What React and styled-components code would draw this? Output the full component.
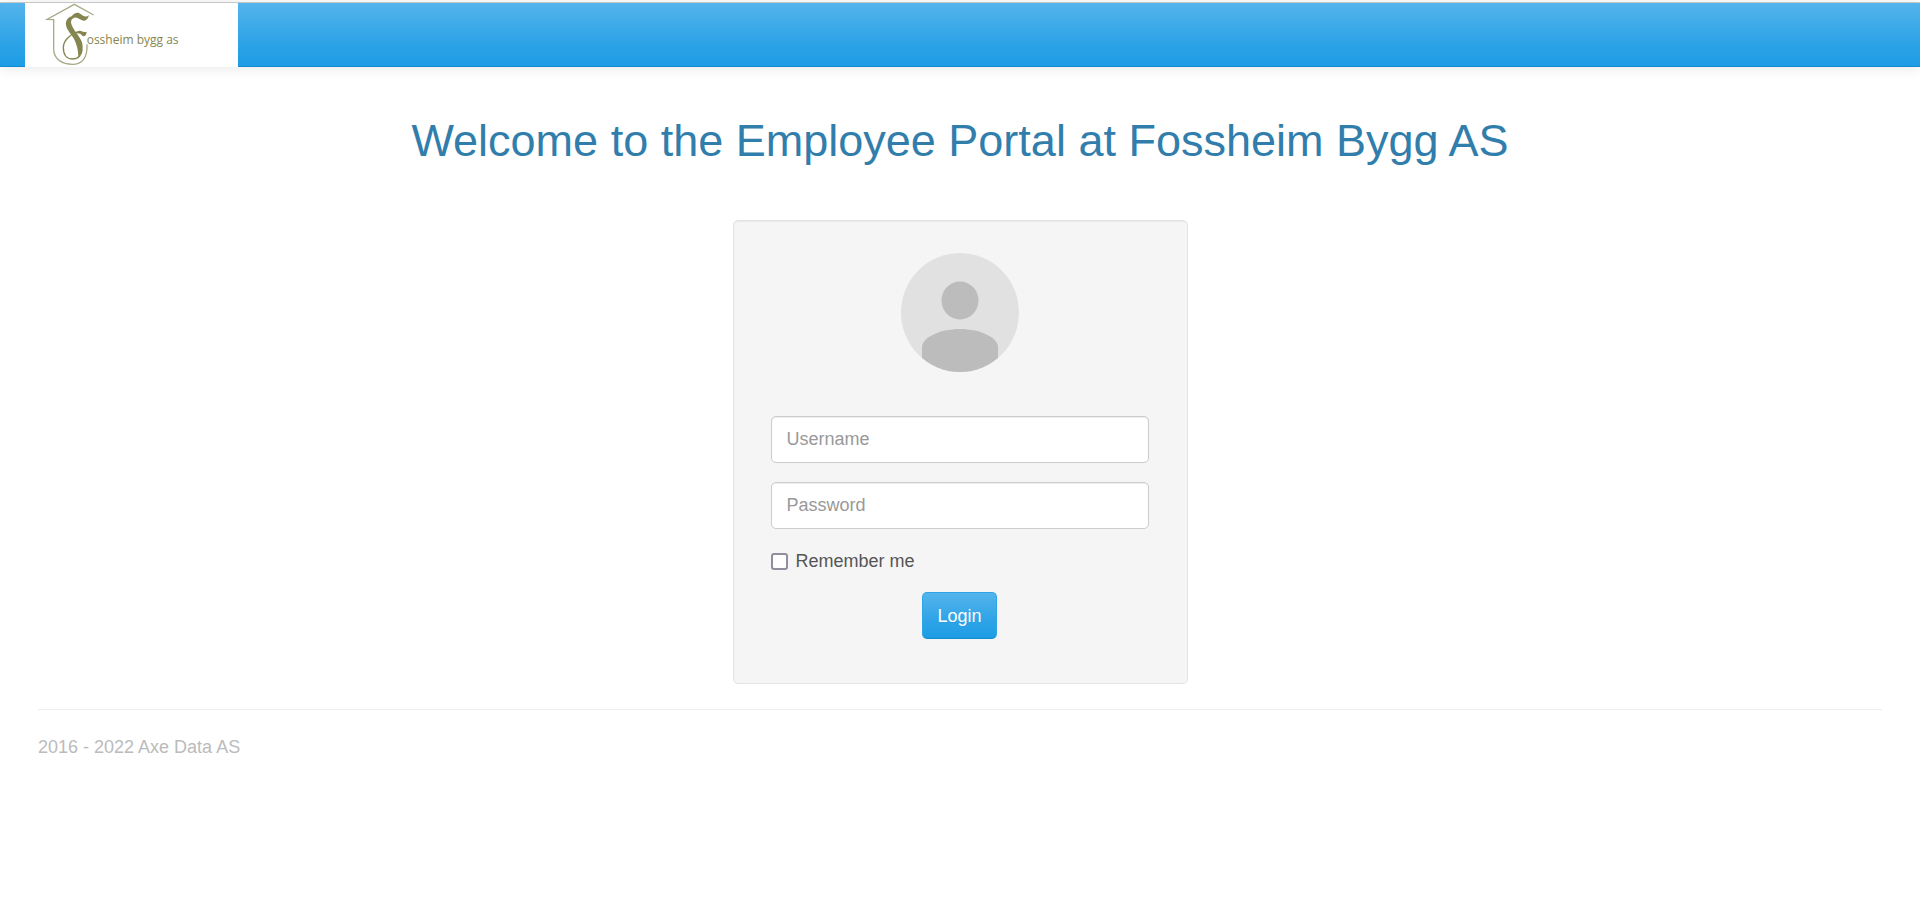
import React from 'react';
import styled, { createGlobalStyle } from 'styled-components';

const gradient = 'linear-gradient(#54b4eb, #2fa4e7 60%, #1d9ce5)';

const GlobalStyle = createGlobalStyle`
  * {
    box-sizing: border-box;
  }

  body {
    margin: 0;
    background: #fff;
    color: #555;
    font-family: 'Liberation Sans', Arial, sans-serif;
    font-size: 18px;
    line-height: 26px;
  }
`;

const Navbar = styled.header`
  display: flex;
  height: 65px;
  margin-top: 2px;
  padding: 0 25px;
  border-top: 1px solid #c4c8ca;
  border-bottom: 1px solid #178acc;
  background: ${gradient};
  box-shadow: 0 1px 12px rgba(0, 0, 0, 0.1);
`;

const Brand = styled.a`
  display: block;
  width: 213px;
  height: 64px;
  background: #fff;

  svg {
    display: block;
  }
`;

const Page = styled.div`
  padding: 0 38px;
`;

const Title = styled.h1`
  margin: 48px 0 54px;
  color: #317eac;
  font-size: 45px;
  font-weight: 400;
  line-height: 51px;
  text-align: center;
`;

const LoginCard = styled.form`
  display: flex;
  flex-direction: column;
  max-width: 455px;
  margin: 0 auto 25px;
  padding: 32px 38px 44px 37px;
  border: 1px solid #e3e3e3;
  border-radius: 5px;
  background: #f5f5f5;
  box-shadow: inset 0 1px 1px rgba(0, 0, 0, 0.05);
`;

const Avatar = styled.svg`
  align-self: center;
  width: 118px;
  height: 119px;
  margin-bottom: 44px;
`;

const TextField = styled.input`
  width: 100%;
  height: 47px;
  margin-bottom: 19px;
  padding: 0 15px;
  border: 1px solid #ccc;
  border-radius: 5px;
  background: #fff;
  box-shadow: inset 0 1px 1px rgba(0, 0, 0, 0.075);
  color: #555;
  font: inherit;

  &::placeholder {
    color: #999;
    opacity: 1;
  }
`;

const Remember = styled.label`
  display: flex;
  align-items: center;
  align-self: flex-start;
  gap: 8px;
  margin-bottom: 18px;
`;

const Checkbox = styled.input`
  appearance: none;
  width: 17px;
  height: 17px;
  margin: 0;
  border: 2px solid #8f8f9d;
  border-radius: 3px;
  background: #fff;

  &:checked {
    background: #2fa4e7;
  }
`;

const LoginButton = styled.button`
  align-self: center;
  height: 47px;
  padding: 0 14px;
  border: 1px solid #2fa4e7;
  border-bottom-color: #178acc;
  border-radius: 5px;
  background: ${gradient};
  color: #fff;
  font: inherit;
  text-shadow: 0 1px 0 rgba(0, 0, 0, 0.05);
  cursor: pointer;
`;

const Footer = styled.footer`
  padding-top: 24px;
  border-top: 1px solid #eee;
  color: #bbb;

  p {
    margin: 0;
  }
`;

const Logo = () => (
  <svg width="213" height="64" viewBox="0 0 639 192" role="img" aria-label="Fossheim bygg as">
    <path
      d="M206 36 L148 4 L66 49 L86 50 V138 C86 170 114 184 142 184 C172 184 188 164 186 124"
      fill="none"
      stroke="#a9ab8a"
      strokeWidth="4"
    />
    <path
      d="M156 87 C138 94 115 110 115 134 C115 156 126 168 143 168 C160 168 171 156 171 138"
      fill="none"
      stroke="#85864f"
      strokeWidth="4"
    />
    <path
      d="M140 40 C128 44 121 54 123 66 C125 82 142 96 149 112 C155 126 160 140 160 162 C170 156 175 140 172 122 C168 102 139 76 138 58 C138 50 142 46 148 44 C160 42 166 54 178 53 C186 52 190 44 192 36 C184 44 174 40 168 34 C160 26 148 28 140 40 Z"
      fill="#85864f"
    />
    <path
      d="M150 92 C154 84 162 82 168 84 C174 87 180 88 185 86 C185 96 178 104 172 98 C166 91 158 90 150 92 Z"
      fill="#85864f"
    />
    <text x="185" y="122" fill="#85864f" fontFamily="'Open Sans', 'Noto Sans', sans-serif" fontSize="36">
      ossheim bygg as
    </text>
  </svg>
);

const App = () => {
  return (
    <>
      <GlobalStyle />
      <Navbar>
        <Brand href="#">
          <Logo />
        </Brand>
      </Navbar>
      <Page>
        <Title>Welcome to the Employee Portal at Fossheim Bygg AS</Title>
        <LoginCard onSubmit={(e) => e.preventDefault()}>
          <Avatar viewBox="0 0 118 119" aria-hidden="true">
            <clipPath id="avatarClip">
              <ellipse cx="59" cy="59.5" rx="59" ry="59.5" />
            </clipPath>
            <g clipPath="url(#avatarClip)">
              <rect width="118" height="119" fill="#e1e1e1" />
              <ellipse cx="59" cy="47.5" rx="18.5" ry="19" fill="#bcbcbc" />
              <path d="M21 119 V94 C21 85 38 76 59 76 C80 76 97 85 97 94 V119 Z" fill="#bcbcbc" />
            </g>
          </Avatar>
          <TextField type="text" name="username" placeholder="Username" aria-label="Username" />
          <TextField type="password" name="password" placeholder="Password" aria-label="Password" />
          <Remember>
            <Checkbox type="checkbox" name="remember" />
            Remember me
          </Remember>
          <LoginButton type="submit">Login</LoginButton>
        </LoginCard>
        <Footer>
          <p>2016 - 2022 Axe Data AS</p>
        </Footer>
      </Page>
    </>
  );
};

export default App;
